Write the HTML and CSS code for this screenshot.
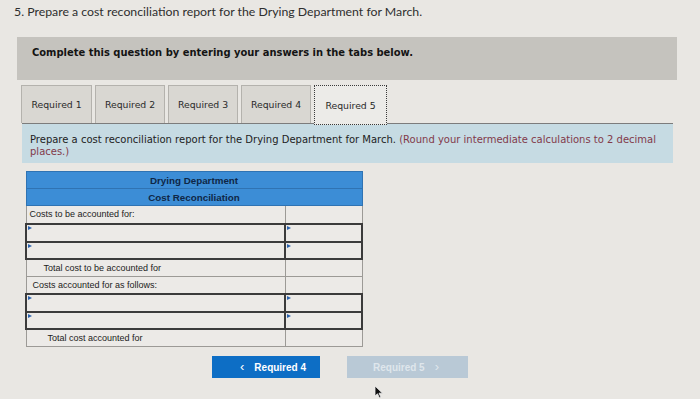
FILE: index.html
```html
<!DOCTYPE html>
<html>
<head>
<meta charset="utf-8">
<link rel="stylesheet" href="styles.css">
</head>
<body>
<div class="page">
  <p class="title">5. Prepare a cost reconciliation report for the Drying Department for March.</p>
  <div class="banner">Complete this question by entering your answers in the tabs below.</div>
  <div class="tabs">
    <div class="tab t1">Required 1</div>
    <div class="tab">Required 2</div>
    <div class="tab">Required 3</div>
    <div class="tab">Required 4</div>
    <div class="tab active">Required 5</div>
  </div>
  <div class="instr">Prepare a cost reconciliation report for the Drying Department for March. <span class="note">(Round your intermediate calculations to 2 decimal<br>places.)</span></div>
  <table class="recon">
    <colgroup><col class="c1"><col class="c2"></colgroup>
    <tr class="head"><th colspan="2">Drying Department</th></tr>
    <tr class="head"><th colspan="2">Cost Reconciliation</th></tr>
    <tr><td class="lbl first">Costs to be accounted for:</td><td class="val first"></td></tr>
    <tr><td class="in"></td><td class="in"></td></tr>
    <tr><td class="in"></td><td class="in"></td></tr>
    <tr><td class="lbl ind1">Total cost to be accounted for</td><td class="val"></td></tr>
    <tr><td class="lbl ind0">Costs accounted for as follows:</td><td class="val"></td></tr>
    <tr><td class="in"></td><td class="in"></td></tr>
    <tr><td class="in"></td><td class="in"></td></tr>
    <tr><td class="lbl ind2">Total cost accounted for</td><td class="val"></td></tr>
  </table>
  <div class="nav">
    <div class="btn prev"><span class="chev">&lsaquo;</span>Required 4</div>
    <div class="btn next">Required 5 <span class="chev2">&rsaquo;</span></div>
  </div>
  <svg class="cursor" width="10" height="14" viewBox="0 0 10 14"><path d="M1 1 L1 11 L3.5 8.8 L5.5 13 L7 12.3 L5 8.2 L8.5 8.2 Z" fill="#111" stroke="#eee" stroke-width="0.8"/></svg>
</div>
</body>
</html>
```
FILE: styles.css
```css
html, body { margin: 0; padding: 0; }
body {
  background: #e9e7e3;
  font-family: "Liberation Sans", Arial, sans-serif;
  width: 700px;
  height: 399px;
  overflow: hidden;
}
.page { position: relative; width: 700px; height: 399px; }
.title {
  margin: 0;
  padding: 4px 0 0 14px;
  font-family: Lato, "Open Sans", sans-serif;
  font-size: 12.3px;
  line-height: 16px;
  color: #2e2e2e;
}
.banner {
  box-sizing: border-box;
  margin: 17px 0 0 17px;
  width: 660px;
  height: 43px;
  padding: 10px 0 0 15px;
  background: #c5c3be;
  font-family: "DejaVu Sans", Verdana, sans-serif;
  font-weight: bold;
  font-size: 9.95px;
  line-height: 12px;
  color: #141414;
}
.tabs {
  display: flex;
  gap: 3px;
  margin: 5px 0 0 21px;
  height: 38px;
  align-items: flex-start;
  position: relative;
  z-index: 1;
}
.tab {
  box-sizing: border-box;
  width: 70px;
  height: 38px;
  background: #d9d7d2;
  border: 1px solid #b4b2ad;
  border-bottom: none;
  font-family: "DejaVu Sans", Verdana, sans-serif;
  font-size: 9.3px;
  color: #2a2a2a;
  display: flex;
  align-items: center;
  justify-content: center;
}
.tab.t1 { width: 71px; }
.tab.active {
  width: 73px;
  height: 40px;
  background: #ecebe8;
  border: 1px dotted #3a3a3a;
}
.instr {
  box-sizing: border-box;
  margin: 0 0 0 22px;
  width: 651px;
  height: 40px;
  border-top: 1px solid #7c7c7c;
  background: #c6dbe3;
  padding: 10px 8px 0 8px;
  font-family: "DejaVu Sans", Verdana, sans-serif;
  font-size: 10px;
  line-height: 12px;
  color: #222;
  white-space: nowrap;
}
.note { color: #823a4a; }
.recon {
  margin: 8px 0 0 25px;
  width: 336px;
  border-collapse: collapse;
  table-layout: fixed;
  font-size: 9px;
  color: #222;
}
.recon col.c1 { width: 259px; }
.recon col.c2 { width: 77px; }
.recon th {
  background: #3c8dd6;
  border: 1px solid #2f73b3;
  height: 16px;
  padding: 0;
  font-size: 9.8px;
  font-weight: bold;
  color: #0f2746;
  text-align: center;
}
.recon td {
  border: 1px solid #9c9a96;
  padding: 0;
  background: #eceae7;
  height: 16px;
  line-height: 11px;
}
.recon td.first { height: 17px; }
.recon td.lbl { padding-left: 3px; }
.recon td.ind0 { padding-left: 6px; }
.recon td.ind1 { padding-left: 17px; }
.recon td.ind2 { padding-left: 21px; }
.recon td.in {
  border: 2px solid #3b3b3b;
  position: relative;
  height: 15.6px;
}
.recon td.in::before {
  content: "";
  position: absolute;
  left: 1px;
  top: 1px;
  border-left: 4px solid #2b62ad;
  border-top: 2.5px solid transparent;
  border-bottom: 2.5px solid transparent;
}
.nav {
  display: flex;
  gap: 27px;
  margin: 9px 0 0 212px;
}
.btn {
  box-sizing: border-box;
  height: 22px;
  display: flex;
  align-items: center;
  font-size: 10px;
  font-weight: bold;
}
.prev {
  width: 108px;
  background: #0d6ec5;
  color: #fff;
  padding-left: 28px;
}
.chev { font-size: 13px; margin-right: 10px; line-height: 10px; font-weight: normal; }
.next {
  width: 121px;
  background: #b9c9d6;
  color: #dfe6ec;
  padding-left: 26px;
}
.chev2 { font-size: 13px; margin-left: 10px; line-height: 10px; font-weight: normal; }
.cursor { position: absolute; left: 374px; top: 385px; }
```
